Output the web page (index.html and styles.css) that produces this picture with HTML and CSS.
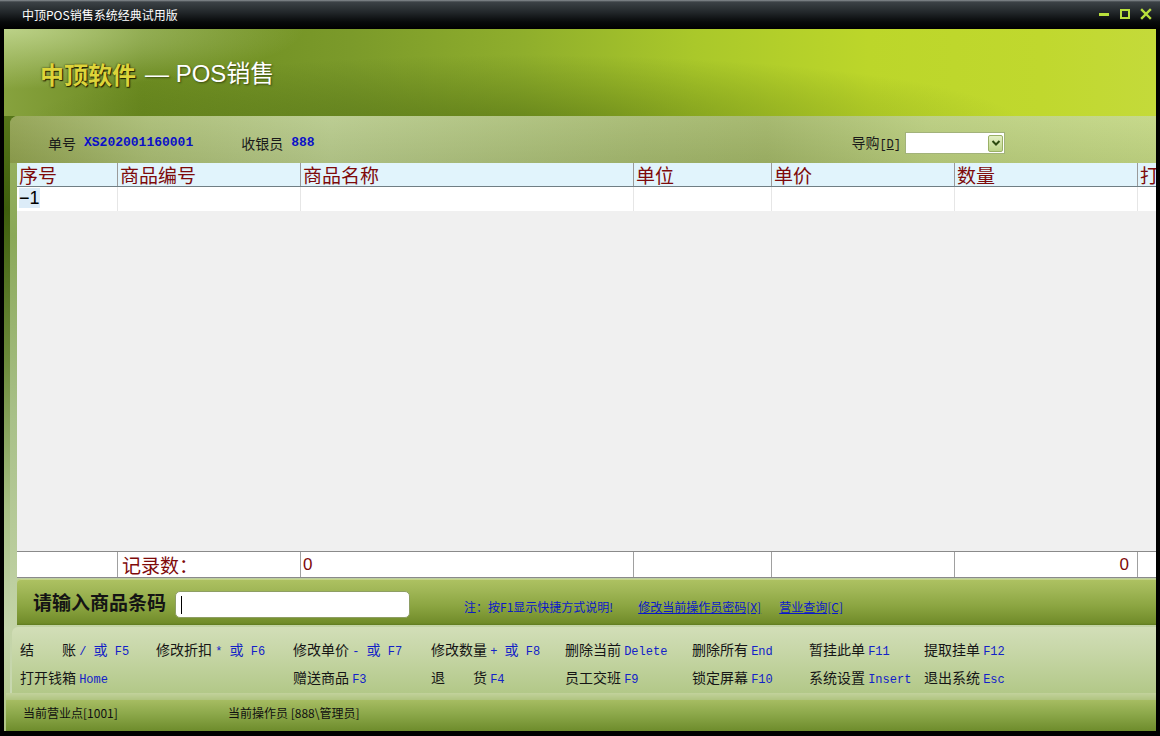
FILE: index.html
```html
<!DOCTYPE html>
<html lang="zh-CN">
<head>
<meta charset="utf-8">
<title>中顶POS销售系统经典试用版</title>
<link rel="stylesheet" href="styles.css">
</head>
<body>
<div class="window">
  <div class="titlebar">
    <span class="wtitle">中顶POS销售系统经典试用版</span>
    <div class="controls">
      <svg width="12" height="12" viewBox="0 0 12 12"><rect x="1" y="5" width="10" height="3" fill="#b9e03c"/></svg>
      <svg width="12" height="12" viewBox="0 0 12 12"><rect x="2" y="2" width="8" height="8" fill="none" stroke="#b9e03c" stroke-width="2"/></svg>
      <svg width="12" height="12" viewBox="0 0 12 12"><path d="M2 2 L10 10 M10 2 L2 10" stroke="#b9e03c" stroke-width="2.4" stroke-linecap="square"/></svg>
    </div>
  </div>
  <div class="frame">
    <div class="header">
      <h1 class="brandline"><span class="brand">中顶软件</span><span class="sub">— POS销售</span></h1>
    </div>
    <div class="panel">
      <div class="info">
        <div class="field"><span class="lbl">单号</span><span class="val">XS202001160001</span></div>
        <div class="field"><span class="lbl">收银员</span><span class="val">888</span></div>
        <div class="field guide"><span class="lbl">导购<span class="acc">[<u>D</u>]</span></span>
          <div class="select"><span class="sel-btn"><svg width="10" height="8" viewBox="0 0 10 8"><path d="M1.5 2 L5 5.5 L8.5 2" fill="none" stroke="#2d4a10" stroke-width="2"/></svg></span></div>
        </div>
      </div>
      <div class="grid">
        <div class="row thead">
          <div class="c">序号</div><div class="c">商品编号</div><div class="c">商品名称</div><div class="c">单位</div><div class="c">单价</div><div class="c">数量</div><div class="c">打折</div>
        </div>
        <div class="row trow">
          <div class="c"><span class="selnum">−1</span></div><div class="c"></div><div class="c"></div><div class="c"></div><div class="c"></div><div class="c"></div><div class="c"></div>
        </div>
        <div class="fill"></div>
        <div class="row tfoot">
          <div class="c"></div><div class="c">记录数：</div><div class="c num">0</div><div class="c"></div><div class="c"></div><div class="c num right">0</div><div class="c"></div>
        </div>
      </div>
      <div class="scanbar">
        <span class="scanlbl">请输入商品条码</span>
        <div class="scaninput"><span class="caret"></span></div>
        <span class="note">注：按F1显示快捷方式说明!</span>
        <a class="link" href="#">修改当前操作员密码[X]</a>
        <a class="link" href="#">营业查询[C]</a>
      </div>
      <div class="shortcuts">
        <div class="sc">结　　账 <span class="k">/ <span class="or">或</span> F5</span></div>
        <div class="sc">修改折扣 <span class="k">* <span class="or">或</span> F6</span></div>
        <div class="sc">修改单价 <span class="k">- <span class="or">或</span> F7</span></div>
        <div class="sc">修改数量 <span class="k">+ <span class="or">或</span> F8</span></div>
        <div class="sc">删除当前 <span class="k">Delete</span></div>
        <div class="sc">删除所有 <span class="k">End</span></div>
        <div class="sc">暂挂此单 <span class="k">F11</span></div>
        <div class="sc">提取挂单 <span class="k">F12</span></div>
        <div class="sc">打开钱箱 <span class="k">Home</span></div>
        <div class="sc"></div>
        <div class="sc">赠送商品 <span class="k">F3</span></div>
        <div class="sc">退　　货 <span class="k">F4</span></div>
        <div class="sc">员工交班 <span class="k">F9</span></div>
        <div class="sc">锁定屏幕 <span class="k">F10</span></div>
        <div class="sc">系统设置 <span class="k">Insert</span></div>
        <div class="sc">退出系统 <span class="k">Esc</span></div>
      </div>
    </div>
    <div class="strip"></div>
    <div class="status">
      <span class="st1">当前营业点[1001]</span>
      <span>当前操作员 [888\管理员]</span>
    </div>
  </div>
</div>
</body>
</html>
```
FILE: styles.css
```css
* { box-sizing: border-box; }
html, body { margin: 0; padding: 0; background: #000; }
body { font-family: "Noto Sans CJK SC", "Liberation Sans", sans-serif; }

.window {
  width: 1160px;
  height: 736px;
  background: #000;
  overflow: hidden;
  display: flex;
  flex-direction: column;
}

.titlebar {
  height: 29px;
  flex: none;
  display: flex;
  align-items: center;
  padding-left: 22px;
  padding-right: 8px;
  background: linear-gradient(to bottom, #8a9094 0px, #3c4246 2px, #23282b 12px, #07090a 22px, #000 29px);
}
.wtitle {
  color: #fff;
  font-size: 12px;
  line-height: 14px;
  padding-top: 1px;
}
.controls {
  margin-left: auto;
  display: flex;
  gap: 9px;
  align-items: center;
  margin-top: -2px;
}

.frame {
  margin: 0 4px;
  height: 702px;
  flex: none;
  display: flex;
  flex-direction: column;
  background: linear-gradient(to bottom, #6d8c25 0px, #3e5e0c 180px, #6c8a3a 330px, #a8c084 480px, #c4d4ac 600px, #b0c484 702px);
}

.header {
  height: 87px;
  flex: none;
  padding: 30px 0 0 36px;
  background:
    radial-gradient(ellipse 300px 60px at 0% 0%, rgba(205,225,160,0.75), rgba(205,225,160,0) 100%),
    radial-gradient(ellipse 500px 70px at 45% 110%, rgba(40,70,0,0.4), rgba(40,70,0,0) 100%),
    linear-gradient(to right, #87a23e 0%, #6b8a20 12%, #7b9a2a 30%, #8fae2c 45%, #aac82a 60%, #bcd62a 75%, #c0d82e 90%, #c4da3a 100%);
}
.brandline {
  margin: 0;
  font-weight: normal;
  font-size: 24px;
  line-height: 30px;
  display: flex;
  align-items: center;
}
.brand {
  color: #ddd43a;
  font-weight: bold;
  text-shadow: 1px 1px 1px #1e1e00, 0 0 2px #33330a;
}
.sub {
  color: #fff;
  margin-left: 9px;
  text-shadow: 1px 1px 2px #3a4a10;
  font-family: "Liberation Sans", "Noto Sans CJK SC", sans-serif;
}

.panel {
  margin-left: 6px;
  border-top-left-radius: 8px;
  display: flex;
  flex-direction: column;
  background: linear-gradient(to bottom, #9cb462 0px, #8aa858 120px, #a8c088 300px, #c4d4a8 520px, #c8d8b0 577px);
}

.info {
  height: 47px;
  flex: none;
  display: flex;
  align-items: center;
  padding: 7px 151px 0 38px;
  gap: 48px;
  border-top-left-radius: 8px;
  background:
    linear-gradient(to bottom, rgba(255,255,255,0.08), rgba(0,0,0,0.05)),
    linear-gradient(to right, #8fa04e 0%, #a8bb72 12%, #b6c98a 28%, #a4b86e 55%, #a0b466 66%, #b8cc7c 80%, #c2d682 100%);
}
.field { display: flex; align-items: center; }
.lbl { color: #1a1a1a; font-size: 14px; line-height: 18px; }
.val {
  color: #0a10c8;
  font-family: "Liberation Mono", monospace;
  font-weight: bold;
  font-size: 13px;
  line-height: 18px;
  margin-left: 8px;
}
.guide { margin-left: auto; }
.acc { font-family: "Liberation Mono", monospace; font-size: 12px; }
.select {
  width: 100px;
  height: 22px;
  margin-left: 4px;
  background: #fff;
  border: 1px solid #a2b27a;
  display: flex;
  justify-content: flex-end;
  align-items: center;
  padding-right: 1px;
}
.sel-btn {
  width: 15px;
  height: 17px;
  background: linear-gradient(to bottom, #e4f0c4, #bcd488);
  border: 1px solid #9ab066;
  border-radius: 2px;
  display: flex;
  align-items: center;
  justify-content: center;
}

.grid {
  margin-left: 7px;
  height: 415px;
  flex: none;
  display: flex;
  flex-direction: column;
  background: #f0f0f0;
  overflow: hidden;
}
.row {
  display: grid;
  grid-template-columns: 101px 183px 333px 138px 183px 183px 183px;
  width: max-content;
  flex: none;
}
.c {
  padding-left: 2px;
  white-space: nowrap;
}
.thead {
  height: 24px;
  background: #e1f4fc;
  border-bottom: 1px solid #707e84;
}
.thead .c {
  border-right: 1px solid #9a9a9a;
  color: #7e0a0a;
  font-size: 19px;
  line-height: 24px;
  height: 23px;
}
.trow {
  height: 24px;
  background: #fff;
}
.trow .c {
  border-right: 1px solid #e6e6e6;
  color: #000;
  font-size: 18px;
  line-height: 22px;
  font-family: "Liberation Sans", sans-serif;
}
.selnum { background: #dcecf8; }
.fill { flex: 1; }
.tfoot {
  height: 27px;
  background: #fff;
  border-top: 1px solid #8a8a8a;
  border-bottom: 1px solid #8a8a8a;
}
.tfoot .c {
  border-right: 1px solid #a0a0a0;
  color: #7e0a0a;
  font-size: 19px;
  line-height: 25px;
  padding-left: 4px;
}
.tfoot .num {
  font-family: "Liberation Sans", sans-serif;
  font-size: 17px;
  padding-left: 2px;
}
.tfoot .right { text-align: right; padding-right: 8px; }

.scanbar {
  margin-left: 7px;
  margin-top: 1px;
  height: 46px;
  flex: none;
  display: flex;
  align-items: center;
  padding-left: 16px;
  border-top-left-radius: 4px;
  background: linear-gradient(to bottom, #aec262 0px, #a2b858 10px, #8aa440 28px, #718c2a 44px, #5f7a20 46px);
  box-shadow: inset 0 1px 0 #c4d488;
}
.scanlbl {
  font-size: 19px;
  font-weight: bold;
  color: #141414;
  line-height: 24px;
}
.scaninput {
  width: 235px;
  height: 27px;
  margin-left: 9px;
  background: #fff;
  border: 1px solid #8e9e64;
  border-radius: 5px;
  padding: 4px 0 0 5px;
  margin-top: 5px;
}
.caret { display: block; width: 1px; height: 18px; background: #000; }
.note {
  margin-left: 54px;
  color: #0a18c8;
  font-size: 12px;
  line-height: 14px;
  margin-top: 10px;
}
.link {
  color: #0a18c8;
  font-size: 12px;
  line-height: 14px;
  margin-top: 10px;
  text-decoration: underline;
}
.note + .link { margin-left: 25px; }
.link + .link { margin-left: 18px; }

.shortcuts {
  margin-left: 2px;
  margin-top: 2px;
  height: 66px;
  flex: none;
  display: grid;
  grid-template-columns: 136px 137px 138px 134px 127px 117px 115px 1fr;
  grid-auto-rows: 28px;
  padding: 8px 0 0 8px;
  border-top-left-radius: 6px;
  background: linear-gradient(to bottom, #d2deb8 0%, #c6d6a6 40%, #b2c888 100%);
}
.sc {
  font-size: 14px;
  color: #151515;
  line-height: 28px;
  white-space: nowrap;
}
.k {
  color: #1222c8;
  font-family: "Liberation Mono", "Noto Sans CJK SC", monospace;
  font-size: 12px;
}
.or {
  font-family: "Noto Sans CJK SC", sans-serif;
  font-size: 14px;
}

.strip {
  height: 7px;
  flex: none;
  margin-left: 2px;
  background: linear-gradient(to bottom, #c2d29c, #b0c480);
}
.status {
  height: 31px;
  flex: none;
  margin-left: 2px;
  display: flex;
  padding: 5px 0 0 17px;
  font-size: 12px;
  line-height: 16px;
  color: #101010;
  background: linear-gradient(to bottom, #a6bc62 0%, #8ca84a 45%, #6e8c2c 100%);
}
.st1 { width: 205px; }
```
